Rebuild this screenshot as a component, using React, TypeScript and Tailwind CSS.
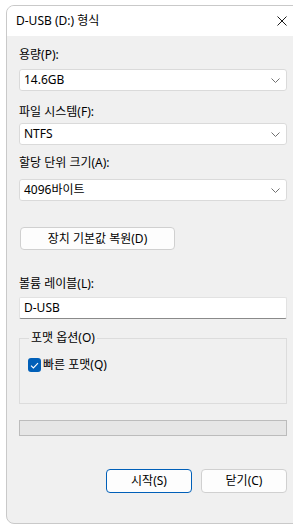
import React from "react";

const font = { fontFamily: '"Noto Sans", "Noto Sans CJK KR", sans-serif' };

function Chevron() {
  return (
    <svg width="9" height="5" viewBox="0 0 9 5" className="mr-[6px]">
      <path d="M0.5 0.5 L4.5 4.5 L8.5 0.5" fill="none" stroke="#707070" strokeWidth="1" />
    </svg>
  );
}

function Select({ value }: { value: string }) {
  return (
    <div className="w-[268px] h-[22px] bg-white border border-[#dadada] rounded-[3px] flex items-center justify-between pl-[4px]">
      <span className="text-[12px] leading-[16px] text-black">{value}</span>
      <Chevron />
    </div>
  );
}

function Label({ children, className }: { children: React.ReactNode; className?: string }) {
  return <div className={"text-[12px] leading-[16px] h-[16px] text-black " + (className || "")}>{children}</div>;
}

export default function App() {
  return (
    <div className="w-[293px] h-[524px] bg-white overflow-hidden" style={font}>
      <div className="ml-[6px] mt-[5px] w-[300px] h-[519px] border border-[#c9c9c9] rounded-[8px] overflow-hidden flex flex-col bg-[#f0f0f0]">
        <div className="h-[30px] bg-white flex items-center justify-between shrink-0">
          <span className="pl-[9px] text-[12px] leading-[16px] text-black">D-USB (D:) 형식</span>
          <div className="w-[46px] h-full flex items-center justify-center">
            <svg width="10" height="10" viewBox="0 0 10 10">
              <path d="M0.5 0.5 L9.5 9.5 M9.5 0.5 L0.5 9.5" stroke="#1a1a1a" strokeWidth="1" />
            </svg>
          </div>
        </div>
        <div className="flex flex-col pl-[12px] pt-[11px]">
          <Label>용량(P):</Label>
          <div className="mt-[6px]"><Select value="14.6GB" /></div>
          <Label className="mt-[13px]">파일 시스템(F):</Label>
          <div className="mt-[3px]"><Select value="NTFS" /></div>
          <Label className="mt-[10px]">할당 단위 크기(A):</Label>
          <div className="mt-[8px]"><Select value="4096바이트" /></div>
          <button className="mt-[26px] ml-[1px] w-[155px] h-[23px] bg-[#fdfdfd] border border-[#d0d0d0] rounded-[4px] text-[12px] leading-[16px] text-black flex items-center justify-center">
            장치 기본값 복원(D)
          </button>
          <Label className="mt-[26px]">볼륨 레이블(L):</Label>
          <div className="mt-[5px] w-[268px] h-[22px] bg-white border border-[#e2e2e2] border-b-[#8a8a8a] rounded-[2px] flex items-center pl-[4px]">
            <span className="text-[12px] leading-[16px] text-black">D-USB</span>
          </div>
          <fieldset className="mt-[11px] w-[268px] h-[74px] border border-[#dcdcdc] px-[8px]">
            <legend className="ml-[1px] px-[2px] text-[12px] leading-[16px] text-black">포맷 옵션(O)</legend>
            <div className="mt-[11px] flex items-center gap-[2px]">
              <div className="w-[13px] h-[14px] bg-[#005fb8] rounded-[3px] flex items-center justify-center">
                <svg width="9" height="7" viewBox="0 0 9 7">
                  <path d="M1 3.6 L3.4 6 L8 1.2" fill="none" stroke="white" strokeWidth="1.1" />
                </svg>
              </div>
              <span className="text-[12px] leading-[16px] text-black">빠른 포맷(Q)</span>
            </div>
          </fieldset>
          <div className="mt-[16px] w-[268px] h-[16px] bg-[#e6e6e6] border border-[#bcbcbc]" />
          <div className="mt-[33px] w-[268px] flex justify-end gap-[9px]">
            <button className="w-[86px] h-[24px] bg-[#fdfdfd] border border-[#005fb8] rounded-[4px] text-[12px] leading-[16px] text-black flex items-center justify-center">
              시작(S)
            </button>
            <button className="w-[86px] h-[24px] bg-[#fdfdfd] border border-[#d0d0d0] rounded-[4px] text-[12px] leading-[16px] text-black flex items-center justify-center">
              닫기(C)
            </button>
          </div>
        </div>
      </div>
    </div>
  );
}
